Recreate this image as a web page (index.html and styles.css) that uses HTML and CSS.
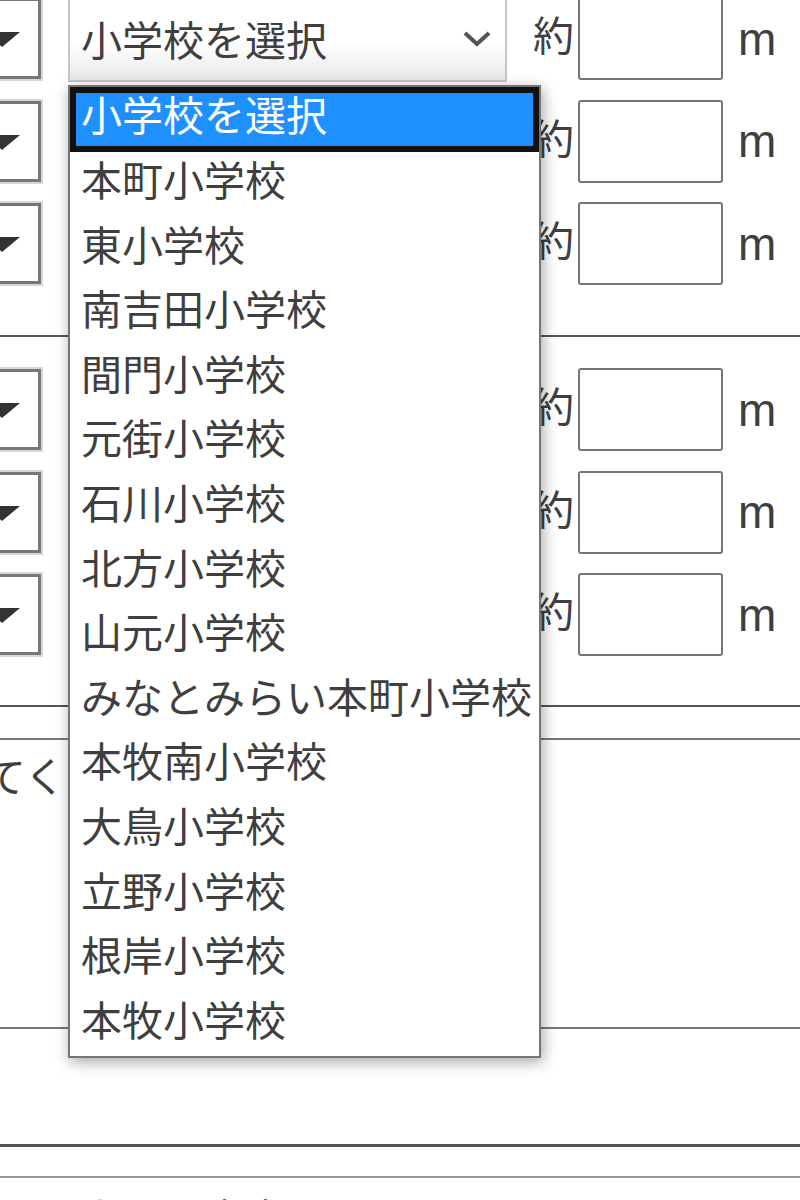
FILE: index.html
```html
<!DOCTYPE html>
<html lang="ja">
<head>
<meta charset="utf-8">
<title>小学校を選択</title>
<link rel="stylesheet" href="styles.css">
</head>
<body>
<div class="page">
  <section class="group group-a">
    <div class="row">
      <div class="mini"><span class="tri"></span></div>
      <div class="school"><span>小学校を選択</span>
        <svg class="chev" width="30" height="20" viewBox="0 0 30 20"><polyline points="3,4 15,15 27,4" fill="none" stroke="#555" stroke-width="4"/></svg>
      </div>
      <span class="yaku">約</span><div class="len"></div><span class="unit">m</span>
    </div>
    <div class="row">
      <div class="mini"><span class="tri"></span></div>
      <div class="school"><span>小学校を選択</span></div>
      <span class="yaku">約</span><div class="len"></div><span class="unit">m</span>
    </div>
    <div class="row">
      <div class="mini"><span class="tri"></span></div>
      <div class="school"><span>小学校を選択</span></div>
      <span class="yaku">約</span><div class="len"></div><span class="unit">m</span>
    </div>
  </section>
  <section class="group group-b">
    <div class="row">
      <div class="mini"><span class="tri"></span></div>
      <div class="school"><span>小学校を選択</span></div>
      <span class="yaku">約</span><div class="len"></div><span class="unit">m</span>
    </div>
    <div class="row">
      <div class="mini"><span class="tri"></span></div>
      <div class="school"><span>小学校を選択</span></div>
      <span class="yaku">約</span><div class="len"></div><span class="unit">m</span>
    </div>
    <div class="row">
      <div class="mini"><span class="tri"></span></div>
      <div class="school"><span>小学校を選択</span></div>
      <span class="yaku">約</span><div class="len"></div><span class="unit">m</span>
    </div>
  </section>
  <div class="spacer"></div>
  <div class="note"><p class="note-text">してください</p></div>
  <div class="blank"></div>
  <div class="blank2"></div>
  <div class="tail"><p class="tail-text">上記の内容</p></div>
</div>

<ul class="dropdown">
  <li class="opt sel">小学校を選択</li>
  <li class="opt">本町小学校</li>
  <li class="opt">東小学校</li>
  <li class="opt">南吉田小学校</li>
  <li class="opt">間門小学校</li>
  <li class="opt">元街小学校</li>
  <li class="opt">石川小学校</li>
  <li class="opt">北方小学校</li>
  <li class="opt">山元小学校</li>
  <li class="opt">みなとみらい本町小学校</li>
  <li class="opt">本牧南小学校</li>
  <li class="opt">大鳥小学校</li>
  <li class="opt">立野小学校</li>
  <li class="opt">根岸小学校</li>
  <li class="opt">本牧小学校</li>
</ul>
</body>
</html>
```

FILE: styles.css
```css
* { box-sizing: border-box; }
html, body { margin: 0; padding: 0; }
body {
  width: 800px;
  height: 1200px;
  overflow: hidden;
  background: #fff;
  font-family: "Noto Sans CJK JP", sans-serif;
  color: #3f3f3f;
}
.page {
  display: flow-root;
  width: 800px;
}
.group {
  display: flex;
  flex-direction: column;
  gap: 19.5px;
  border-bottom: 2px solid #555;
}
.group-a { margin-top: -3px; padding-bottom: 50px; }
.group-b { padding-top: 31px; padding-bottom: 49px; }

.row {
  display: flex;
  align-items: center;
  height: 83px;
}
.mini {
  flex: none;
  width: 100px;
  height: 81px;
  margin-left: -59px;
  border: 3px solid #777;
  box-shadow: 0 0 0 2px #d6d6d6;
  background: #fff;
  display: flex;
  align-items: center;
  justify-content: flex-end;
  padding-right: 18px;
}
.tri {
  width: 0;
  height: 0;
  border-left: 18px solid transparent;
  border-right: 18px solid transparent;
  border-top: 15px solid #333;
  margin-top: 2px;
}
.school {
  flex: none;
  width: 439px;
  height: 86px;
  margin-left: 27px;
  border: 2px solid #c6c6c6;
  background: linear-gradient(#ffffff 55%, #e8e8e8);
  display: flex;
  align-items: center;
  justify-content: space-between;
  padding: 0 13px 0 11px;
  font-size: 41px;
  line-height: 53.4px;
  white-space: nowrap;
}
.chev { display: block; }
.yaku {
  margin-left: 26px;
  font-size: 41px;
  line-height: 53.4px;
  margin-bottom: 9px;
}
.len {
  flex: none;
  width: 145px;
  height: 83px;
  margin-left: 4px;
  border: 2px solid #767676;
  border-radius: 3px;
  background: #fff;
}
.unit {
  margin-left: 15px;
  font-family: "Liberation Sans", Arial, sans-serif;
  font-size: 46px;
}
.spacer {
  height: 33px;
  border-bottom: 2px solid #777;
}
.note {
  height: 289px;
  padding-top: 8px;
  border-bottom: 2px solid #777;
}
.note-text {
  margin: 0 0 0 -55px;
  font-size: 41px;
  line-height: 53.4px;
  white-space: nowrap;
}
.blank {
  height: 118px;
  border-bottom: 3px solid #555;
}
.blank2 {
  height: 31px;
  border-bottom: 2px solid #9a9a9a;
}
.tail { padding-top: 12px; }
.tail-text {
  margin: 0 0 0 81px;
  font-size: 41px;
  line-height: 53.4px;
}

.dropdown {
  position: absolute;
  left: 68px;
  top: 85px;
  width: 473px;
  margin: 0;
  padding: 0;
  list-style: none;
  border: 2px solid #767676;
  background: #fff;
  box-shadow: 2px 4px 14px rgba(0, 0, 0, 0.35);
  font-size: 41px;
  color: #3f3f3f;
}
.opt {
  height: 64.6px;
  line-height: 53.4px;
  padding-left: 11px;
  white-space: nowrap;
}
.opt.sel {
  height: 65px;
  background: #1e90ff;
  color: #fff;
  box-shadow: inset 0 0 0 6px #111;
}
```
